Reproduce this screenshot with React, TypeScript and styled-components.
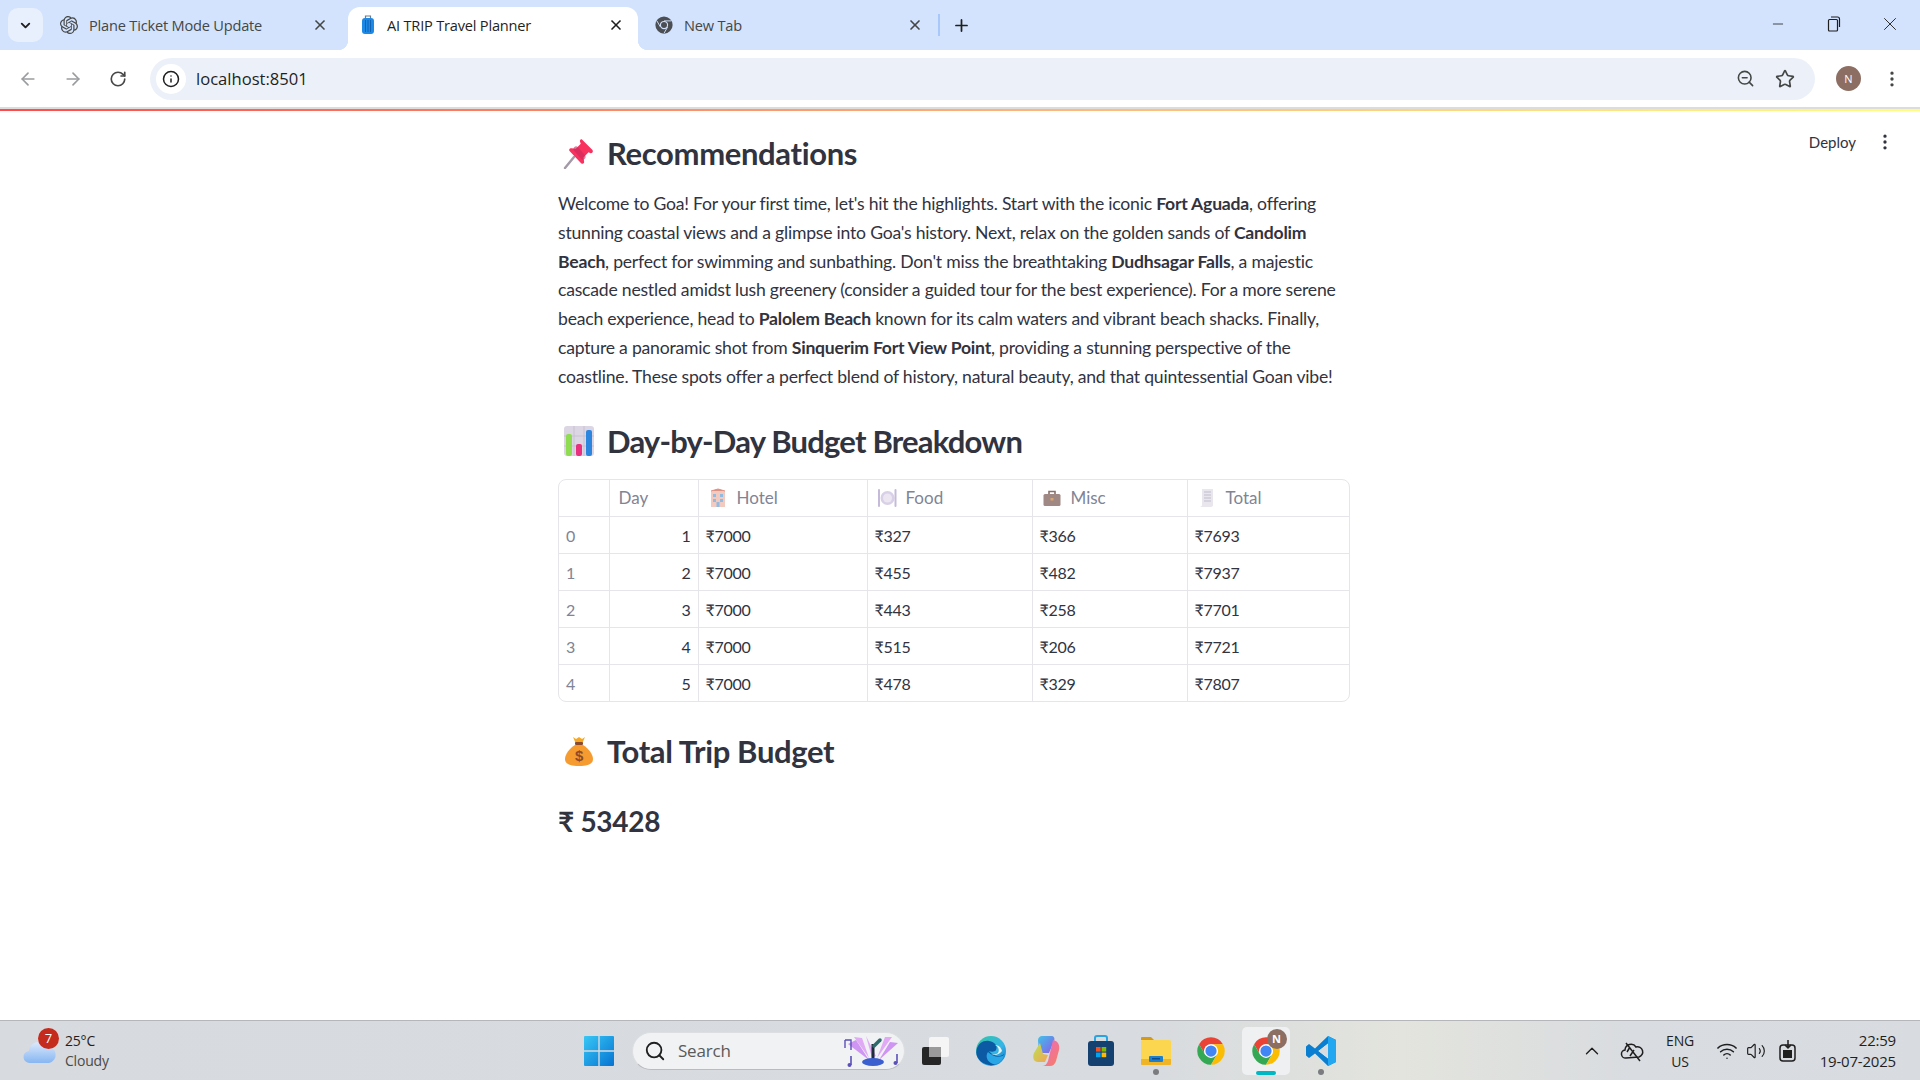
import React from 'react';
import styled, { createGlobalStyle } from 'styled-components';
import { ArrowLeft, ArrowRight, RotateCw, Info, ZoomOut, Star, EllipsisVertical, X, Plus, ChevronDown, Minus, Search, ChevronUp, Wifi, Volume2 } from 'lucide-react';
import { SiOpenai } from 'react-icons/si';

const GlobalStyle = createGlobalStyle`
  html, body { margin: 0; padding: 0; background: #fff; }
  body { font-family: "Lato", "Liberation Sans", sans-serif; color: #31333f; }
`;

const Screen = styled.div`
  width: 1920px;
  height: 1080px;
  display: flex;
  flex-direction: column;
  overflow: hidden;
  position: relative;
`;

/* browser chrome */
const TabStrip = styled.div`
  height: 50px;
  flex: none;
  background: #d3e3fd;
  display: flex;
  align-items: flex-end;
  padding-left: 8px;
  font-family: "Open Sans", sans-serif;
`;
const TabListButton = styled.div`
  width: 35px;
  height: 34px;
  margin-bottom: 8px;
  border-radius: 10px;
  background: #e9f0fd;
  color: #1f1f1f;
  display: flex;
  align-items: center;
  justify-content: center;
`;
const Tab = styled.div<{ $active?: boolean; $width: number; $tail: number }>`
  width: ${(p) => p.$width}px;
  height: 43px;
  box-sizing: border-box;
  padding: 0 ${(p) => p.$tail}px 7px ${(p) => (p.$active ? 12 : 17)}px;
  border-radius: 12px 12px 0 0;
  position: relative;
  background: ${(p) => (p.$active ? '#fff' : 'transparent')};
  color: ${(p) => (p.$active ? '#1f1f1f' : '#444746')};
  display: flex;
  align-items: center;
  gap: 11px;
  flex: none;
  &::before, &::after {
    content: '';
    display: ${(p) => (p.$active ? 'block' : 'none')};
    position: absolute;
    bottom: 0;
    width: 10px;
    height: 10px;
  }
  &::before {
    left: -10px;
    background: radial-gradient(circle at 0 0, #d3e3fd 10px, #fff 10.5px);
  }
  &::after {
    right: -10px;
    background: radial-gradient(circle at 100% 0, #d3e3fd 10px, #fff 10.5px);
  }
`;
const TabTitle = styled.span`
  flex: 1;
  font-size: 14.6px;
  letter-spacing: -0.2px;
  white-space: nowrap;
`;
const TabDivider = styled.div`
  width: 2px;
  height: 22px;
  margin: 0 0 14px 0;
  background: #a8c7fa;
`;
const NewTab = styled.div`
  width: 42px;
  height: 36px;
  margin-bottom: 7px;
  display: flex;
  align-items: center;
  justify-content: center;
  color: #1f1f1f;
`;
const WindowButtons = styled.div`
  margin-left: auto;
  height: 50px;
  display: flex;
  align-items: center;
  padding: 0 2px 2px 0;
  box-sizing: border-box;
  color: #1f1f1f;
`;
const WindowButton = styled.div`
  width: 56px;
  display: flex;
  justify-content: center;
`;
const Toolbar = styled.div`
  height: 57px;
  flex: none;
  background: #fff;
  border-radius: 10px 10px 0 0;
  display: flex;
  align-items: center;
  padding: 0 18px 0 5px;
  box-sizing: border-box;
`;
const NavButton = styled.div<{ $muted?: boolean }>`
  width: 45px;
  display: flex;
  justify-content: center;
  color: ${(p) => (p.$muted ? '#9a9c9f' : '#474747')};
`;
const AddressBar = styled.div`
  flex: 1;
  height: 42px;
  margin: 0 21px 0 10px;
  border-radius: 21px;
  background: #ecf1f9;
  display: flex;
  align-items: center;
  padding: 0 10px 0 6px;
  color: #1f1f1f;
`;
const SiteInfo = styled.div`
  width: 30px;
  height: 30px;
  border-radius: 50%;
  background: #fff;
  display: flex;
  align-items: center;
  justify-content: center;
`;
const Url = styled.span`
  flex: 1;
  margin-left: 10px;
  font-family: "Open Sans", sans-serif;
  font-size: 16.6px;
`;
const BarIcon = styled.div`
  width: 40px;
  display: flex;
  justify-content: center;
  color: #444746;
`;
const Avatar = styled.div`
  width: 25px;
  height: 25px;
  margin-right: 21px;
  border-radius: 50%;
  background: #8d6e63;
  color: #fff;
  font: 11px "Open Sans", sans-serif;
  display: flex;
  align-items: center;
  justify-content: center;
`;
const Rule = styled.div`
  height: 2px;
  flex: none;
  background: #dcdcdc;
`;
const RainbowLine = styled.div`
  height: 2px;
  flex: none;
  background: linear-gradient(90deg, #ff4b4b 0%, #fdb77a 55%, #fffd80 100%);
`;

/* streamlit page */
const Content = styled.main`
  flex: 1;
  position: relative;
  background: #fff;
  padding: 20px 0 0 558px;
  box-sizing: border-box;
`;
const DeployBar = styled.div`
  position: absolute;
  top: 21px;
  right: 25px;
  display: flex;
  align-items: center;
  gap: 19px;
  font-size: 15px;
  color: #31333f;
`;
const Column = styled.div`
  width: 792px;
`;
const Heading = styled.h2<{ $top?: number; $tracking?: number }>`
  margin: ${(p) => p.$top ?? 0}px 0 0;
  height: 44px;
  display: flex;
  align-items: center;
  gap: 12px;
  padding-left: 5px;
  font-size: 31px;
  font-weight: 700;
  letter-spacing: ${(p) => p.$tracking ?? -0.35}px;
  white-space: nowrap;
`;
const Paragraph = styled.p`
  margin: 15px 0 0;
  font-size: 17.6px;
  line-height: 28.8px;
  letter-spacing: -0.22px;
  white-space: nowrap;
  b { font-weight: 700; }
`;
const TableFrame = styled.div`
  margin-top: 16px;
  border: 1px solid #e6e6ea;
  border-radius: 8px;
  overflow: hidden;
`;
const Table = styled.table`
  width: 100%;
  table-layout: fixed;
  border-collapse: collapse;
`;
const HeadCell = styled.th<{ $width?: number }>`
  width: ${(p) => (p.$width ? `${p.$width}px` : 'auto')};
  height: 37px;
  box-sizing: border-box;
  padding: 0 9px;
  text-align: left;
  font-size: 17px;
  font-weight: 400;
  color: #808495;
  border-left: 1px solid #e6e6ea;
  &:first-child { border-left: none; }
`;
const HeadLabel = styled.span`
  display: flex;
  align-items: center;
  gap: 9px;
`;
const Cell = styled.td<{ $right?: boolean; $index?: boolean }>`
  height: 36px;
  padding: 0 7px;
  font-size: 16px;
  letter-spacing: -0.3px;
  color: ${(p) => (p.$index ? '#808495' : '#31333f')};
  text-align: ${(p) => (p.$right ? 'right' : 'left')};
  border-left: 1px solid #e6e6ea;
  border-top: 1px solid #e6e6ea;
  &:first-child { border-left: none; }
`;
const GrandTotal = styled.div`
  margin-top: 26px;
  font-size: 28px;
  font-weight: 700;
  line-height: 44px;
  letter-spacing: -0.3px;
`;

/* taskbar */
const Taskbar = styled.footer`
  height: 60px;
  flex: none;
  box-sizing: border-box;
  border-top: 1px solid #b4b6b9;
  background: linear-gradient(90deg, #d7dade 0%, #d8dbdf 60%, #e3e4dd 73%, #d9dce0 85%, #d8dbe0 100%);
  display: flex;
  align-items: center;
`;
const Weather = styled.div`
  width: 571px;
  flex: none;
  box-sizing: border-box;
  padding-left: 23px;
  display: flex;
  align-items: center;
  gap: 8px;
  position: relative;
  font-family: "Open Sans", sans-serif;
`;
const WeatherBadge = styled.span`
  position: absolute;
  left: 38px;
  top: -3px;
  width: 21px;
  height: 21px;
  border-radius: 50%;
  background: #c42b1c;
  color: #fff;
  font-size: 13px;
  display: flex;
  align-items: center;
  justify-content: center;
`;
const WeatherText = styled.div`
  line-height: 20px;
  font-size: 14px;
  color: #1f1f1f;
  letter-spacing: -0.2px;
  span { display: block; color: #4a4a4a; }
`;
const TaskIcon = styled.div<{ $active?: boolean; $running?: boolean }>`
  width: 48px;
  height: 48px;
  margin: 0 3.5px;
  flex: none;
  border-radius: 5px;
  position: relative;
  display: flex;
  align-items: center;
  justify-content: center;
  background: ${(p) => (p.$active ? '#eef0f2' : 'transparent')};
  &::after {
    content: '';
    display: ${(p) => (p.$active || p.$running ? 'block' : 'none')};
    position: absolute;
    bottom: 0;
    left: 50%;
    transform: translateX(-50%);
    width: ${(p) => (p.$active ? '20px' : '6px')};
    height: ${(p) => (p.$active ? '4px' : '6px')};
    border-radius: 3px;
    background: ${(p) => (p.$active ? '#00b7c3' : '#7a7c80')};
  }
`;
const AppBadge = styled.span`
  position: absolute;
  top: 2px;
  right: 3px;
  width: 20px;
  height: 20px;
  border-radius: 50%;
  background: #8d6e63;
  color: #fff;
  font: 700 11px "Open Sans", sans-serif;
  display: flex;
  align-items: center;
  justify-content: center;
`;
const SearchPill = styled.div`
  width: 273px;
  height: 38px;
  flex: none;
  margin: 0 3px 0 6px;
  box-sizing: border-box;
  border-radius: 19px;
  background: #f0f2f4;
  border: 1px solid #dcdee1;
  border-bottom-color: #b9bbbe;
  padding: 0 0 0 11px;
  display: flex;
  align-items: center;
  gap: 12px;
  color: #5a5a5a;
  font: 17px "Open Sans", sans-serif;
  letter-spacing: -0.2px;
`;
const SearchWord = styled.span`
  flex: 1;
`;
const Tray = styled.div`
  margin-left: auto;
  display: flex;
  align-items: center;
  color: #1f1f1f;
  font: 14px "Open Sans", sans-serif;
  letter-spacing: -0.2px;
  padding-right: 24px;
`;
const TrayIcon = styled.div<{ $width: number }>`
  width: ${(p) => p.$width}px;
  display: flex;
  justify-content: center;
`;
const Lang = styled.div`
  width: 50px;
  margin-right: 8px;
  text-align: center;
  line-height: 21px;
`;
const Clock = styled.div`
  width: 88px;
  margin-left: 3px;
  text-align: right;
  line-height: 21px;
  font-size: 15px;
  white-space: nowrap;
`;

const rows = [
  [1, 327, 366, 7693],
  [2, 455, 482, 7937],
  [3, 443, 258, 7701],
  [4, 515, 206, 7721],
  [5, 478, 329, 7807],
];

const ChromeLogo = ({ size = 30 }: { size?: number }) => (
  <svg width={size} height={size} viewBox="0 0 48 48">
    <path fill="#ea4335" d="M4.95 13A22 22 0 0 1 43.05 13H24A11 11 0 0 0 14.47 29.5Z" />
    <path fill="#34a853" d="M4.95 13A22 22 0 0 0 24 46L33.53 29.5H14.47Z" />
    <path fill="#fbbc04" d="M43.05 13A22 22 0 0 1 24 46L33.53 29.5A11 11 0 0 0 24 13Z" />
    <circle cx="24" cy="24" r="11" fill="#fff" />
    <circle cx="24" cy="24" r="9" fill="#4285f4" />
  </svg>
);

const GreyChromeLogo = () => (
  <svg width="18" height="18" viewBox="0 0 48 48">
    <circle cx="24" cy="24" r="23" fill="#4b4f53" />
    <path d="M24 13H43M14.5 29.5 5 13M33.5 29.5 24 46" stroke="#d3e3fd" strokeWidth="2.5" />
    <circle cx="24" cy="24" r="11" fill="#d3e3fd" />
    <circle cx="24" cy="24" r="8" fill="#4b4f53" />
  </svg>
);

const SuitcaseIcon = () => (
  <svg width="16" height="20" viewBox="0 0 16 20">
    <path d="M5.5 3V1h5v2" fill="none" stroke="#6b7b8c" strokeWidth="1.2" />
    <rect x="2" y="3" width="12" height="16" rx="3" fill="#1e88e5" />
    <path d="M5.5 5v12M8 5v12M10.5 5v12" stroke="#0d5fae" strokeWidth="0.9" />
  </svg>
);

const PinIcon = () => (
  <svg width="32" height="32" viewBox="0 0 32 32">
    <path d="M2 31 11 20" stroke="#a39aa8" strokeWidth="2.4" strokeLinecap="round" />
    <path d="M19 2.5 29.5 13a2 2 0 0 1-2.4 3l-1.6-.8-5 5.2 .6 4.2c.3 2-1.6 3-3 1.6L6.8 14.2c-1.4-1.5 0-3.4 1.8-3l4.2.6 5-5-.7-1.8c-.7-2 .8-3.3 1.9-2.5Z" fill="#f8315f" />
    <path d="M13 12 20 20" stroke="#c92a5c" strokeWidth="5" strokeLinecap="round" opacity=".6" />
  </svg>
);

const ChartIcon = () => (
  <svg width="32" height="32" viewBox="0 0 32 32">
    <rect x="1" y="1" width="30" height="30" rx="3" fill="#dcd6e4" />
    <path d="M1 11h30M1 21h30M11 1v30M21 1v30" stroke="#c6c0d0" strokeWidth="1" />
    <rect x="3" y="9" width="6" height="22" rx="2" fill="#8fdc53" />
    <rect x="13" y="19" width="6" height="12" rx="2" fill="#e8307f" />
    <rect x="23" y="5" width="6" height="26" rx="2" fill="#2c86e0" />
  </svg>
);

const MoneyBagIcon = () => (
  <svg width="32" height="32" viewBox="0 0 32 32">
    <path d="M10 2l3 2 3-2 3 2 3-2-3 7h-6Z" fill="#f7a823" />
    <rect x="12" y="7" width="8" height="3" rx="1" fill="#8c4a2b" />
    <path d="M12 10h8c5 3 10 9 10 14 0 5-5 7-14 7S2 29 2 24c0-5 5-11 10-14Z" fill="#f59b2f" />
    <text x="16" y="26" textAnchor="middle" fontSize="15" fontWeight="700" fill="#8c4a2b" fontFamily="Liberation Sans, sans-serif">$</text>
  </svg>
);

const HotelIcon = () => (
  <svg width="20" height="20" viewBox="0 0 20 20" opacity=".75">
    <rect x="3" y="3" width="14" height="16" fill="#f0b9ab" />
    <path d="M3 3l7-2 7 2" fill="#d66a58" stroke="#d66a58" />
    <path d="M5 6h3v3H5zM12 6h3v3h-3zM5 11h3v3H5zM12 11h3v3h-3z" fill="#6da5d8" />
    <rect x="8.5" y="14" width="3" height="5" fill="#6da5d8" />
  </svg>
);

const PlateIcon = () => (
  <svg width="20" height="20" viewBox="0 0 20 20">
    <circle cx="10.5" cy="10" r="7" fill="#d8d0e6" />
    <circle cx="10.5" cy="10" r="4.5" fill="#ebe6f2" />
    <path d="M2 2v16M18.5 2v16" stroke="#c5bad9" strokeWidth="2" strokeLinecap="round" />
  </svg>
);

const BriefcaseIcon = () => (
  <svg width="20" height="20" viewBox="0 0 20 20">
    <path d="M7 6V3.5h6V6" fill="none" stroke="#8a6f6a" strokeWidth="1.6" />
    <rect x="1.5" y="6" width="17" height="12" rx="1.5" fill="#a08884" />
    <rect x="8.5" y="10" width="3" height="2.5" fill="#d7a56f" />
  </svg>
);

const ReceiptIcon = () => (
  <svg width="20" height="20" viewBox="0 0 20 20">
    <path d="M5 1h11v16c0 1-1 2-2 2H3c1-.5 2-1 2-2Z" fill="#e9e6ee" />
    <path d="M7 4h7M7 7h7M7 10h7M7 13h7" stroke="#c2bccb" strokeWidth="1.1" />
  </svg>
);

const CloudIcon = () => (
  <svg width="34" height="26" viewBox="0 0 34 26">
    <defs>
      <linearGradient id="cloud" x1="0" y1="0" x2="0" y2="1">
        <stop offset="0" stopColor="#dbe9fb" />
        <stop offset="1" stopColor="#86b6f2" />
      </linearGradient>
    </defs>
    <path d="M7 25a6 6 0 0 1-1-12 9 9 0 0 1 17-4 8 8 0 0 1 3 16Z" fill="url(#cloud)" />
  </svg>
);

const WindowsLogo = () => (
  <svg width="30" height="30" viewBox="0 0 30 30">
    <defs>
      <linearGradient id="win" x1="0" y1="0" x2="1" y2="1">
        <stop offset="0" stopColor="#38c7f5" />
        <stop offset="1" stopColor="#0673d2" />
      </linearGradient>
    </defs>
    <path fill="url(#win)" d="M0 1a1 1 0 0 1 1-1h13.3v14.3H0ZM15.7 0H29a1 1 0 0 1 1 1v13.3H15.7ZM0 15.7h14.3V30H1a1 1 0 0 1-1-1ZM15.7 15.7H30V29a1 1 0 0 1-1 1H15.7Z" />
  </svg>
);

const MicArt = () => (
  <svg width="62" height="34" viewBox="0 0 62 34">
    <path d="M12 3 27 24 20 4ZM50 3 35 24 43 3ZM30 24 24 2 34 22Z" fill="#e0aaf5" />
    <path d="M56 9 37 26 48 8ZM6 10 27 26 14 6Z" fill="#cf95f3" />
    <path d="M31 10v16" stroke="#1f2b3a" strokeWidth="3" />
    <path d="M32 12 38 6" stroke="#2f6a6a" strokeWidth="3.5" strokeLinecap="round" />
    <ellipse cx="31" cy="28" rx="11" ry="4" fill="#3c5fd0" />
    <path d="M3 6h6v10M3 6v8" fill="none" stroke="#5b50b8" strokeWidth="1.4" />
    <path d="M55 20v9M9 22v9" stroke="#5b50b8" strokeWidth="1.6" />
    <circle cx="53.5" cy="29" r="2" fill="#5b50b8" />
    <circle cx="7.5" cy="31" r="2" fill="#5b50b8" />
  </svg>
);

const TaskViewIcon = () => (
  <svg width="30" height="30" viewBox="0 0 30 30">
    <rect x="1" y="11" width="19" height="18" rx="2" fill="#262626" />
    <rect x="8" y="1" width="20" height="20" rx="2" fill="#f5f5f5" />
    <rect x="8" y="11" width="12" height="10" fill="#9a9a9a" />
  </svg>
);

const EdgeIcon = () => (
  <svg width="32" height="32" viewBox="0 0 32 32">
    <defs>
      <linearGradient id="edge" x1="0" y1="0" x2="1" y2="1">
        <stop offset="0" stopColor="#2fc7a3" />
        <stop offset=".6" stopColor="#37b5e8" />
        <stop offset="1" stopColor="#0f6cbd" />
      </linearGradient>
    </defs>
    <circle cx="16" cy="16" r="15" fill="url(#edge)" />
    <path d="M1.5 15C3 8 9 5 14 6c6 1 9 5 7 9-1 2-5 2-7 1 4 5 11 7 15 3-1 7-8 12-15 11C6 29 0 22 1.5 15Z" fill="#0c59a4" />
    <path d="M13 17c-3 4-1 10 5 12 5 1 10-3 11-9-4 3-11 2-16-3Z" fill="#29a6e6" />
    <path d="M15 19c3 1 6 .5 8-1 2-3 0-7-3-8 3 0 6 2 7 6-3 4-8 5-12 3Z" fill="#e8f4ef" />
  </svg>
);

const CopilotIcon = () => (
  <svg width="30" height="32" viewBox="0 0 30 32">
    <defs>
      <linearGradient id="cpA" x1="0" y1="0" x2="1" y2="1">
        <stop offset="0" stopColor="#3fc3e8" />
        <stop offset="1" stopColor="#8a5be8" />
      </linearGradient>
      <linearGradient id="cpB" x1="0" y1="0" x2="1" y2="1">
        <stop offset="0" stopColor="#b7e34d" />
        <stop offset="1" stopColor="#f5a35a" />
      </linearGradient>
      <linearGradient id="cpC" x1="0" y1="0" x2="1" y2="1">
        <stop offset="0" stopColor="#e96ad0" />
        <stop offset="1" stopColor="#f77e5c" />
      </linearGradient>
    </defs>
    <path d="M11 1h9c3 0 4 2 3 5l-5 12H8L7 5c0-2 2-4 4-4Z" fill="url(#cpA)" />
    <path d="M9 8 3 18c-2 5 0 9 4 9h7l3-7-5-1Z" fill="url(#cpB)" />
    <path d="M22 5c5 1 7 5 6 10l-3 11c-1 3-3 5-6 5h-8c3 0 5-2 6-5Z" fill="url(#cpC)" />
  </svg>
);

const StoreIcon = () => (
  <svg width="28" height="32" viewBox="0 0 28 32">
    <path d="M8 7V3c0-1 1-2 2-2h8c1 0 2 1 2 2v4" fill="none" stroke="#2aa3e0" strokeWidth="2" />
    <rect x="1" y="6" width="26" height="25" rx="3" fill="#14416f" />
    <rect x="9" y="12" width="4.6" height="4.6" fill="#f25022" />
    <rect x="14.6" y="12" width="4.6" height="4.6" fill="#7fba00" />
    <rect x="9" y="17.6" width="4.6" height="4.6" fill="#00a4ef" />
    <rect x="14.6" y="17.6" width="4.6" height="4.6" fill="#ffb900" />
  </svg>
);

const FolderIcon = () => (
  <svg width="32" height="32" viewBox="0 0 32 32">
    <path d="M1 3a1 1 0 0 1 1-1h9l3 3h-13Z" fill="#d39a1c" />
    <rect x="1" y="5" width="30" height="25" rx="1.5" fill="#fcd64f" />
    <path d="M1 24h30v5a1 1 0 0 1-1 1H2a1 1 0 0 1-1-1Z" fill="#f0b429" />
    <rect x="9" y="21" width="14" height="6" rx="1" fill="#1c7fd0" />
    <rect x="12" y="23" width="8" height="1.5" fill="#0b4d8a" />
  </svg>
);

const VsCodeIcon = () => (
  <svg width="32" height="32" viewBox="0 0 32 32">
    <path d="M23 1 31 5v22l-8 4-13-12.5L4 23l-3-2.5v-9L4 9l6 4.5Z" fill="#0a7fd1" />
    <path d="M23 8.5 13.5 16 23 23.5Z" fill="#fff" />
    <path d="M23 1 31 5v22l-8 4Z" fill="#22a7f0" />
    <path d="M23 9v14l-9.5-7Z" fill="#d8dbdf" />
  </svg>
);

const CloudOffIcon = () => (
  <svg width="24" height="24" viewBox="0 0 24 24" fill="none" stroke="#1f1f1f" strokeWidth="1.5">
    <path d="M6 19a4 4 0 0 1-1-8 6 6 0 0 1 11-3 5 5 0 0 1 3 10Z" />
    <path d="M6 4 20 22M10 8l-3 5M14 11l-4 6" />
  </svg>
);

const BatteryIcon = () => (
  <svg width="22" height="24" viewBox="0 0 22 24" fill="none" stroke="#1f1f1f" strokeWidth="1.5">
    <rect x="3" y="6" width="15" height="16" rx="3" />
    <rect x="6" y="11" width="9" height="8" fill="#1f1f1f" stroke="none" />
    <path d="M11 1v8M8 6l3 3 3-3" />
  </svg>
);

const RestoreIcon = () => (
  <svg width="14" height="16" viewBox="0 0 14 16" fill="none" stroke="#1f1f1f" strokeWidth="1.2">
    <rect x="1.5" y="3.5" width="9" height="11.5" rx="1" />
    <path d="M4 1h6.5a2 2 0 0 1 2 2v8" />
  </svg>
);

export default function App() {
  return (
    <Screen>
      <GlobalStyle />
      <TabStrip>
        <TabListButton><ChevronDown size={15} strokeWidth={3} /></TabListButton>
        <Tab $width={305} $tail={20}>
          <SiOpenai size={18} />
          <TabTitle>Plane Ticket Mode Update</TabTitle>
          <X size={16} strokeWidth={2.5} />
        </Tab>
        <Tab $active $width={290} $tail={14}>
          <SuitcaseIcon />
          <TabTitle>AI TRIP Travel Planner</TabTitle>
          <X size={16} strokeWidth={2.5} />
        </Tab>
        <Tab $width={300} $tail={15}>
          <GreyChromeLogo />
          <TabTitle>New Tab</TabTitle>
          <X size={16} strokeWidth={2.5} />
        </Tab>
        <TabDivider />
        <NewTab><Plus size={19} strokeWidth={2.2} /></NewTab>
        <WindowButtons>
          <WindowButton><Minus size={16} strokeWidth={1.2} /></WindowButton>
          <WindowButton><RestoreIcon /></WindowButton>
          <WindowButton><X size={22} strokeWidth={1} /></WindowButton>
        </WindowButtons>
      </TabStrip>
      <Toolbar>
        <NavButton $muted><ArrowLeft size={20} /></NavButton>
        <NavButton $muted><ArrowRight size={20} /></NavButton>
        <NavButton><RotateCw size={18} strokeWidth={2.2} /></NavButton>
        <AddressBar>
          <SiteInfo><Info size={18} /></SiteInfo>
          <Url>localhost:8501</Url>
          <BarIcon><ZoomOut size={19} /></BarIcon>
          <BarIcon><Star size={20} /></BarIcon>
        </AddressBar>
        <Avatar>N</Avatar>
        <EllipsisVertical size={20} color="#444746" />
      </Toolbar>
      <Rule />
      <RainbowLine />
      <Content>
        <DeployBar>
          Deploy
          <EllipsisVertical size={20} />
        </DeployBar>
        <Column>
          <Heading><PinIcon />Recommendations</Heading>
          <Paragraph>
            Welcome to Goa! For your first time, let's hit the highlights. Start with the iconic <b>Fort Aguada</b>, offering<br />
            stunning coastal views and a glimpse into Goa's history. Next, relax on the golden sands of <b>Candolim</b><br />
            <b>Beach</b>, perfect for swimming and sunbathing. Don't miss the breathtaking <b>Dudhsagar Falls</b>, a majestic<br />
            cascade nestled amidst lush greenery (consider a guided tour for the best experience). For a more serene<br />
            beach experience, head to <b>Palolem Beach</b> known for its calm waters and vibrant beach shacks. Finally,<br />
            capture a panoramic shot from <b>Sinquerim Fort View Point</b>, providing a stunning perspective of the<br />
            coastline. These spots offer a perfect blend of history, natural beauty, and that quintessential Goan vibe!
          </Paragraph>
          <Heading $top={27} $tracking={-0.8}><ChartIcon />Day-by-Day Budget Breakdown</Heading>
          <TableFrame>
            <Table>
              <thead>
                <tr>
                  <HeadCell $width={50} />
                  <HeadCell $width={89}>Day</HeadCell>
                  <HeadCell $width={169}><HeadLabel><HotelIcon />Hotel</HeadLabel></HeadCell>
                  <HeadCell $width={165}><HeadLabel><PlateIcon />Food</HeadLabel></HeadCell>
                  <HeadCell $width={155}><HeadLabel><BriefcaseIcon />Misc</HeadLabel></HeadCell>
                  <HeadCell><HeadLabel><ReceiptIcon />Total</HeadLabel></HeadCell>
                </tr>
              </thead>
              <tbody>
                {rows.map(([day, food, misc, total], i) => (
                  <tr key={day}>
                    <Cell $index>{i}</Cell>
                    <Cell $right>{day}</Cell>
                    <Cell>₹7000</Cell>
                    <Cell>₹{food}</Cell>
                    <Cell>₹{misc}</Cell>
                    <Cell>₹{total}</Cell>
                  </tr>
                ))}
              </tbody>
            </Table>
          </TableFrame>
          <Heading $top={27}><MoneyBagIcon />Total Trip Budget</Heading>
          <GrandTotal>₹ 53428</GrandTotal>
        </Column>
      </Content>
      <Taskbar>
        <Weather>
          <CloudIcon />
          <WeatherBadge>7</WeatherBadge>
          <WeatherText>25°C<span>Cloudy</span></WeatherText>
        </Weather>
        <TaskIcon><WindowsLogo /></TaskIcon>
        <SearchPill>
          <Search size={22} color="#1f1f1f" />
          <SearchWord>Search</SearchWord>
          <MicArt />
        </SearchPill>
        <TaskIcon><TaskViewIcon /></TaskIcon>
        <TaskIcon><EdgeIcon /></TaskIcon>
        <TaskIcon><CopilotIcon /></TaskIcon>
        <TaskIcon><StoreIcon /></TaskIcon>
        <TaskIcon $running><FolderIcon /></TaskIcon>
        <TaskIcon><ChromeLogo /></TaskIcon>
        <TaskIcon $active>
          <ChromeLogo />
          <AppBadge>N</AppBadge>
        </TaskIcon>
        <TaskIcon $running><VsCodeIcon /></TaskIcon>
        <Tray>
          <TrayIcon $width={34}><ChevronUp size={22} strokeWidth={1.5} /></TrayIcon>
          <TrayIcon $width={46}><CloudOffIcon /></TrayIcon>
          <Lang>ENG<br />US</Lang>
          <TrayIcon $width={28}><Wifi size={22} strokeWidth={1.6} /></TrayIcon>
          <TrayIcon $width={30}><Volume2 size={20} strokeWidth={1.4} /></TrayIcon>
          <TrayIcon $width={34}><BatteryIcon /></TrayIcon>
          <Clock>22:59<br />19-07-2025</Clock>
        </Tray>
      </Taskbar>
    </Screen>
  );
}
